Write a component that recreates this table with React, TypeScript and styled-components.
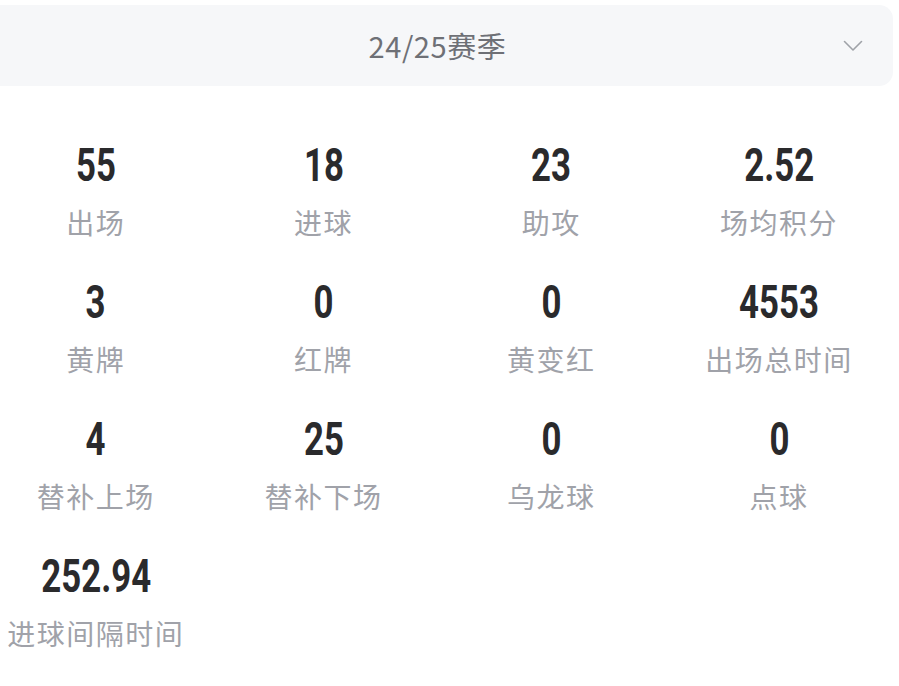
import styled, { createGlobalStyle } from 'styled-components';

const GlobalStyle = createGlobalStyle`
  body {
    margin: 0;
    background: #ffffff;
    font-family: 'Noto Sans', 'Noto Sans CJK SC', sans-serif;
    overflow: hidden;
  }
`;

type Stat = { value: string; label: string };

const stats: Stat[] = [
  { value: '55', label: '出场' },
  { value: '18', label: '进球' },
  { value: '23', label: '助攻' },
  { value: '2.52', label: '场均积分' },
  { value: '3', label: '黄牌' },
  { value: '0', label: '红牌' },
  { value: '0', label: '黄变红' },
  { value: '4553', label: '出场总时间' },
  { value: '4', label: '替补上场' },
  { value: '25', label: '替补下场' },
  { value: '0', label: '乌龙球' },
  { value: '0', label: '点球' },
  { value: '252.94', label: '进球间隔时间' },
];

const Page = styled.div`
  width: 911px;
  margin-left: -18px;
  padding-top: 5px;
`;

const SeasonBar = styled.div`
  position: relative;
  height: 81px;
  border-radius: 14px;
  background: #f6f7f9;
  display: flex;
  align-items: center;
  justify-content: center;
`;

const SeasonText = styled.span`
  font-family: 'Noto Sans CJK SC', sans-serif;
  font-size: 29px;
  color: #6e7076;
  letter-spacing: 0.6px;
  margin-top: -2px;
`;

const Chevron = styled.svg`
  position: absolute;
  right: 30px;
  top: 50%;
  margin-top: -6px;
`;

const StatsGrid = styled.div`
  display: grid;
  grid-template-columns: repeat(4, 1fr);
  row-gap: 32px;
  margin-top: 51px;
`;

const Cell = styled.div`
  display: flex;
  flex-direction: column;
  align-items: center;
  gap: 9px;
`;

const Value = styled.span`
  display: inline-block;
  height: 56px;
  line-height: 56px;
  font-family: Roboto, 'Liberation Sans', sans-serif;
  font-weight: 700;
  font-size: 47px;
  color: #2a2a2c;
  transform: scaleX(0.74);
`;

const Label = styled.span`
  height: 40px;
  line-height: 40px;
  font-family: 'Noto Sans CJK SC', sans-serif;
  font-size: 28px;
  letter-spacing: 1.5px;
  color: #a0a2a9;
`;

const App = () => (
  <Page>
    <GlobalStyle />
    <SeasonBar>
      <SeasonText>24/25赛季</SeasonText>
      <Chevron width="20" height="12" viewBox="0 0 20 12" fill="none">
        <path d="M1.5 1.5 L10 10 L18.5 1.5" stroke="#9fa2a8" strokeWidth="1.6" strokeLinecap="round" strokeLinejoin="round" />
      </Chevron>
    </SeasonBar>
    <StatsGrid>
      {stats.map((s) => (
        <Cell key={s.label}>
          <Value>{s.value}</Value>
          <Label>{s.label}</Label>
        </Cell>
      ))}
    </StatsGrid>
  </Page>
);

export default App;
